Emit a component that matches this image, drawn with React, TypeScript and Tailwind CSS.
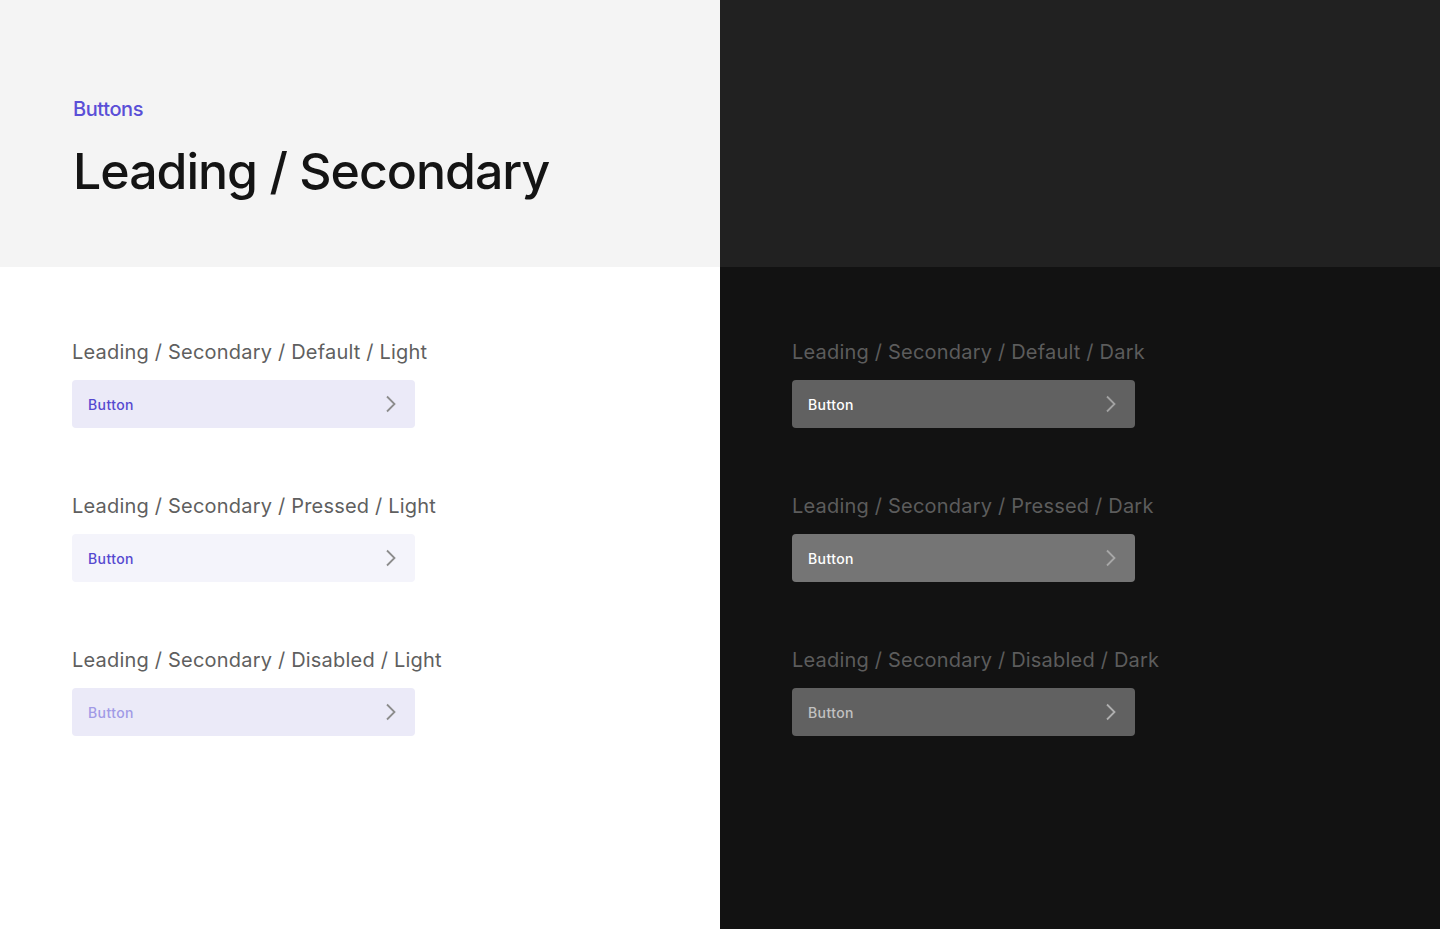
import React from 'react';

type Variant = {
  state: string;
  bg: string;
  text: string;
  chevron: string;
};

const lightVariants: Variant[] = [
  { state: 'Default', bg: 'bg-[#ebeaf8]', text: 'text-[#5548d0]', chevron: 'text-[#8c8c8c]' },
  { state: 'Pressed', bg: 'bg-[#f4f4fb]', text: 'text-[#5548d0]', chevron: 'text-[#8c8c8c]' },
  { state: 'Disabled', bg: 'bg-[#ebeaf8]', text: 'text-[#a19ae6]', chevron: 'text-[#8c8c8c]' },
];

const darkVariants: Variant[] = [
  { state: 'Default', bg: 'bg-[#616161]', text: 'text-white', chevron: 'text-[#a3a3a3]' },
  { state: 'Pressed', bg: 'bg-[#757575]', text: 'text-white', chevron: 'text-[#a8a8a8]' },
  { state: 'Disabled', bg: 'bg-[#616161]', text: 'text-[#c2c2c2]', chevron: 'text-[#b0b0b0]' },
];

const Chevron: React.FC<{ className: string }> = ({ className }) => (
  <svg width="12" height="18" viewBox="0 0 12 18" fill="none" className={className}>
    <path d="M2 1.5 L9.5 9 L2 16.5" stroke="currentColor" strokeWidth="1.8" />
  </svg>
);

const Section: React.FC<{ mode: 'Light' | 'Dark'; variants: Variant[]; labelColor: string }> = ({
  mode,
  variants,
  labelColor,
}) => (
  <div className="flex flex-col gap-16 pl-[72px] pt-[71px]">
    {variants.map((v) => (
      <div key={v.state} className="flex flex-col gap-[14px]">
        <div className={`text-[20px] leading-[28px] tracking-[0.2px] ${labelColor}`}>
          Leading / Secondary / {v.state} / {mode}
        </div>
        <div className={`flex h-12 w-[343px] items-center justify-between rounded pl-4 pr-[18px] ${v.bg}`}>
          <span className={`text-[14px] font-medium tracking-[0.4px] ${v.text}`}>Button</span>
          <Chevron className={v.chevron} />
        </div>
      </div>
    ))}
  </div>
);

export default function App() {
  return (
    <div className="grid h-[929px] w-[1440px] grid-cols-2 font-['Inter',sans-serif]">
      <div className="flex flex-col bg-white">
        <div className="flex h-[267px] flex-col gap-[18px] bg-[#f4f4f4] pl-[73px] pt-[95px]">
          <div className="text-[20px] font-medium leading-[28px] tracking-[-0.4px] text-[#5a4fd7]">Buttons</div>
          <h1 className="text-[50px] font-medium leading-[60px] tracking-[-1px] text-[#141414]">Leading / Secondary</h1>
        </div>
        <Section mode="Light" variants={lightVariants} labelColor="text-[#5f5f5f]" />
      </div>
      <div className="flex flex-col bg-[#121212]">
        <div className="h-[267px] bg-[#212121]" />
        <Section mode="Dark" variants={darkVariants} labelColor="text-[#5c5c5c]" />
      </div>
    </div>
  );
}
